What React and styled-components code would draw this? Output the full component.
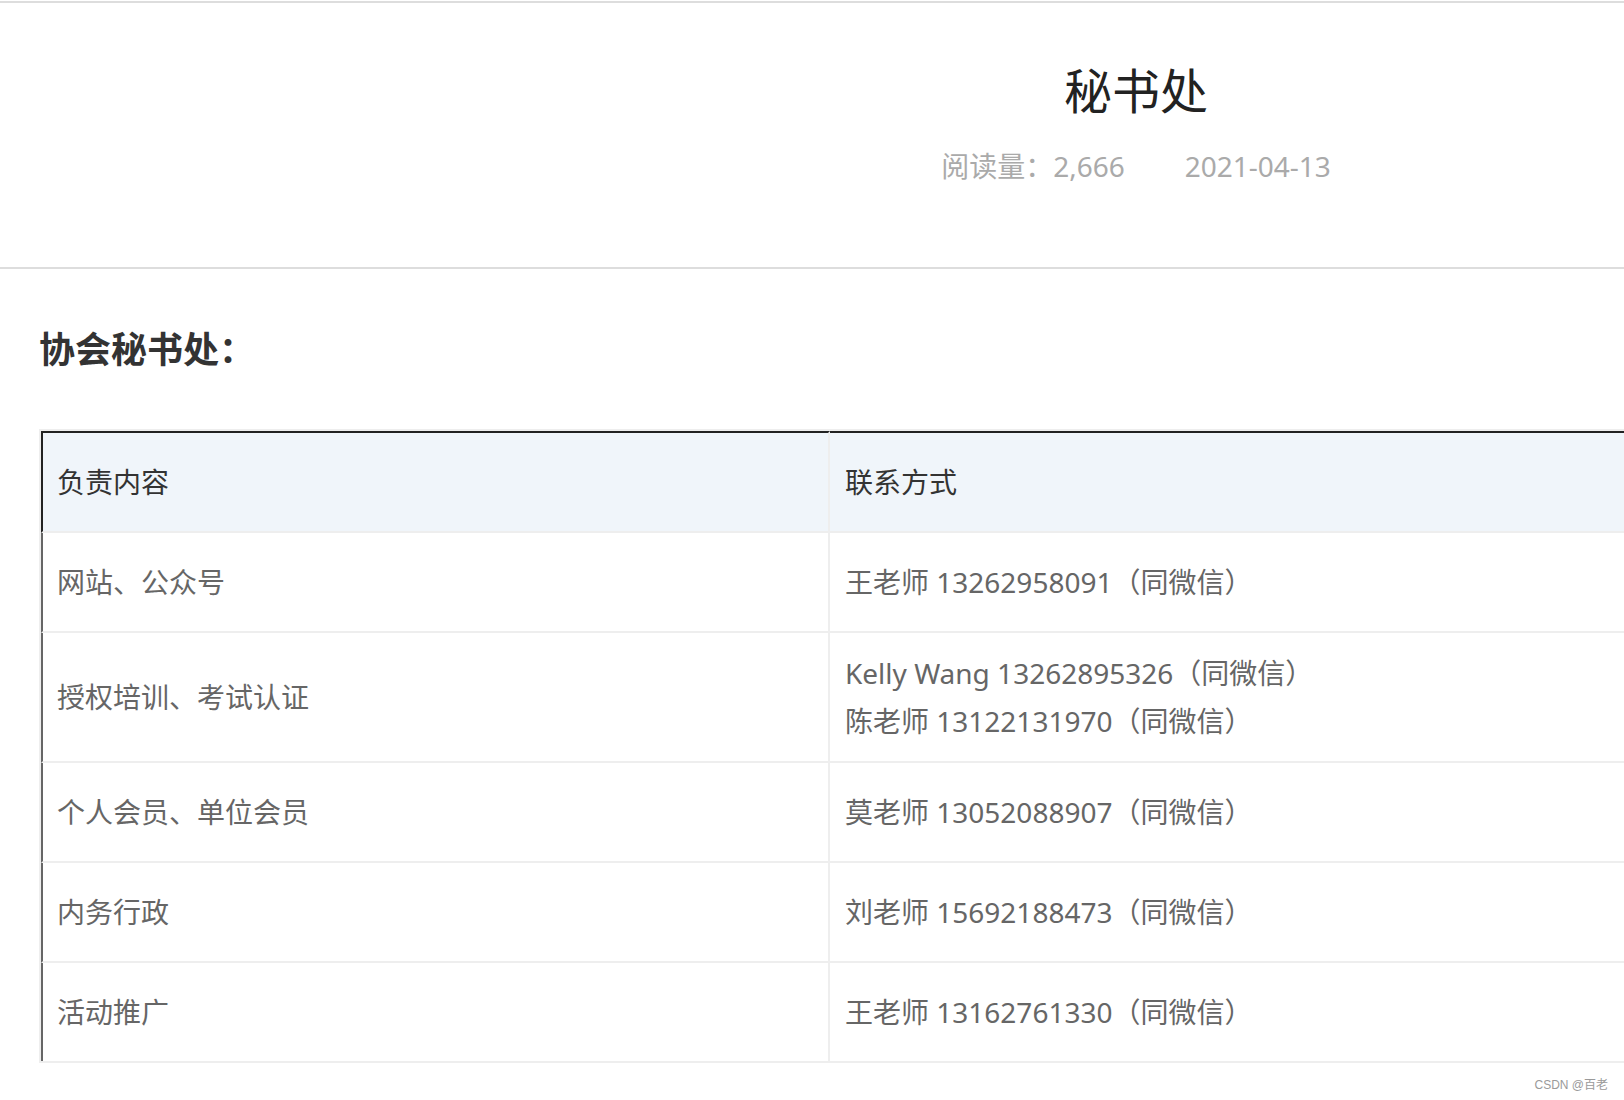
import React from "react";
import styled, { createGlobalStyle } from "styled-components";

const GlobalStyle = createGlobalStyle`
	html, body {
		margin: 0;
		padding: 0;
		background: #fff;
	}
	body {
		font-family: "Noto Sans", "Noto Sans CJK SC", sans-serif;
	}
`;

const Page = styled.div`
	position: relative;
	min-height: 1100px;
	overflow: hidden;
`;

const Article = styled.div`
	width: 2272px;
	padding-top: 1px;
`;

const Header = styled.header`
	border-top: 2px solid #dddddd;
	border-bottom: 2px solid #dddddd;
	padding: 64px 0 87px;
	text-align: center;
`;

const Title = styled.h1`
	margin: 0;
	font-size: 48px;
	line-height: 48px;
	font-weight: 400;
	color: #222;
`;

const Meta = styled.div`
	margin-top: 37px;
	display: flex;
	justify-content: center;
	gap: 60px;
	font-size: 28px;
	line-height: 28px;
	color: #aaaaaa;
`;

const Content = styled.section`
	padding: 63px 39px 0;
`;

const SectionTitle = styled.h2`
	margin: 0 0 61px;
	font-size: 36px;
	line-height: 36px;
	font-weight: 700;
	color: #333;
`;

const Table = styled.table`
	width: 100%;
	table-layout: fixed;
	border-collapse: separate;
	border-spacing: 0;
	border: 2px solid #eeeeee;
	font-size: 28px;
	line-height: 48px;
`;

const Th = styled.th`
	box-sizing: border-box;
	height: 102px;
	padding: 0 ${(p) => (p.$first ? "14px" : "15px")};
	text-align: left;
	font-weight: 400;
	color: #333;
	background: #f0f5fa;
	border-top: 2px solid #222;
	border-bottom: 2px solid #eeeeee;
	border-left: ${(p) => (p.$first ? "2px solid #222" : "0")};
	border-right: ${(p) => (p.$first ? "2px solid #eeeeee" : "0")};
	width: ${(p) => (p.$first ? "789px" : "auto")};
`;

const Td = styled.td`
	box-sizing: border-box;
	height: ${(p) => (p.$last ? "98px" : "100px")};
	padding: 16px ${(p) => (p.$first ? "14px" : "15px")};
	vertical-align: middle;
	color: #666;
	border-bottom: ${(p) => (p.$last ? "0" : "2px solid #eeeeee")};
	border-left: ${(p) => (p.$first ? "2px solid #666" : "0")};
	border-right: ${(p) => (p.$first ? "2px solid #eeeeee" : "0")};
`;

const Line = styled.div`
	white-space: nowrap;
`;

const Watermark = styled.div`
	position: absolute;
	right: 16px;
	bottom: 8px;
	font-family: "Liberation Sans", "Noto Sans CJK SC", sans-serif;
	font-size: 12px;
	line-height: 14px;
	color: #9a9a9a;
`;

const rows = [
	{ duty: "网站、公众号", contacts: ["王老师 13262958091（同微信）"] },
	{
		duty: "授权培训、考试认证",
		contacts: ["Kelly Wang 13262895326（同微信）", "陈老师 13122131970（同微信）"],
	},
	{ duty: "个人会员、单位会员", contacts: ["莫老师 13052088907（同微信）"] },
	{ duty: "内务行政", contacts: ["刘老师 15692188473（同微信）"] },
	{ duty: "活动推广", contacts: ["王老师 13162761330（同微信）"] },
];

const App = () => {
	return (
		<Page>
			<GlobalStyle />
			<Article>
				<Header>
					<Title>秘书处</Title>
					<Meta>
						<span>阅读量：2,666</span>
						<span>2021-04-13</span>
					</Meta>
				</Header>
				<Content>
					<SectionTitle>协会秘书处：</SectionTitle>
					<Table>
						<thead>
							<tr>
								<Th $first>负责内容</Th>
								<Th>联系方式</Th>
							</tr>
						</thead>
						<tbody>
							{rows.map((row, i) => {
								const last = i === rows.length - 1;
								return (
									<tr key={row.duty}>
										<Td $first $last={last}>
											{row.duty}
										</Td>
										<Td $last={last}>
											{row.contacts.map((c) => (
												<Line key={c}>{c}</Line>
											))}
										</Td>
									</tr>
								);
							})}
						</tbody>
					</Table>
				</Content>
			</Article>
			<Watermark>CSDN @百老</Watermark>
		</Page>
	);
};

export default App;
